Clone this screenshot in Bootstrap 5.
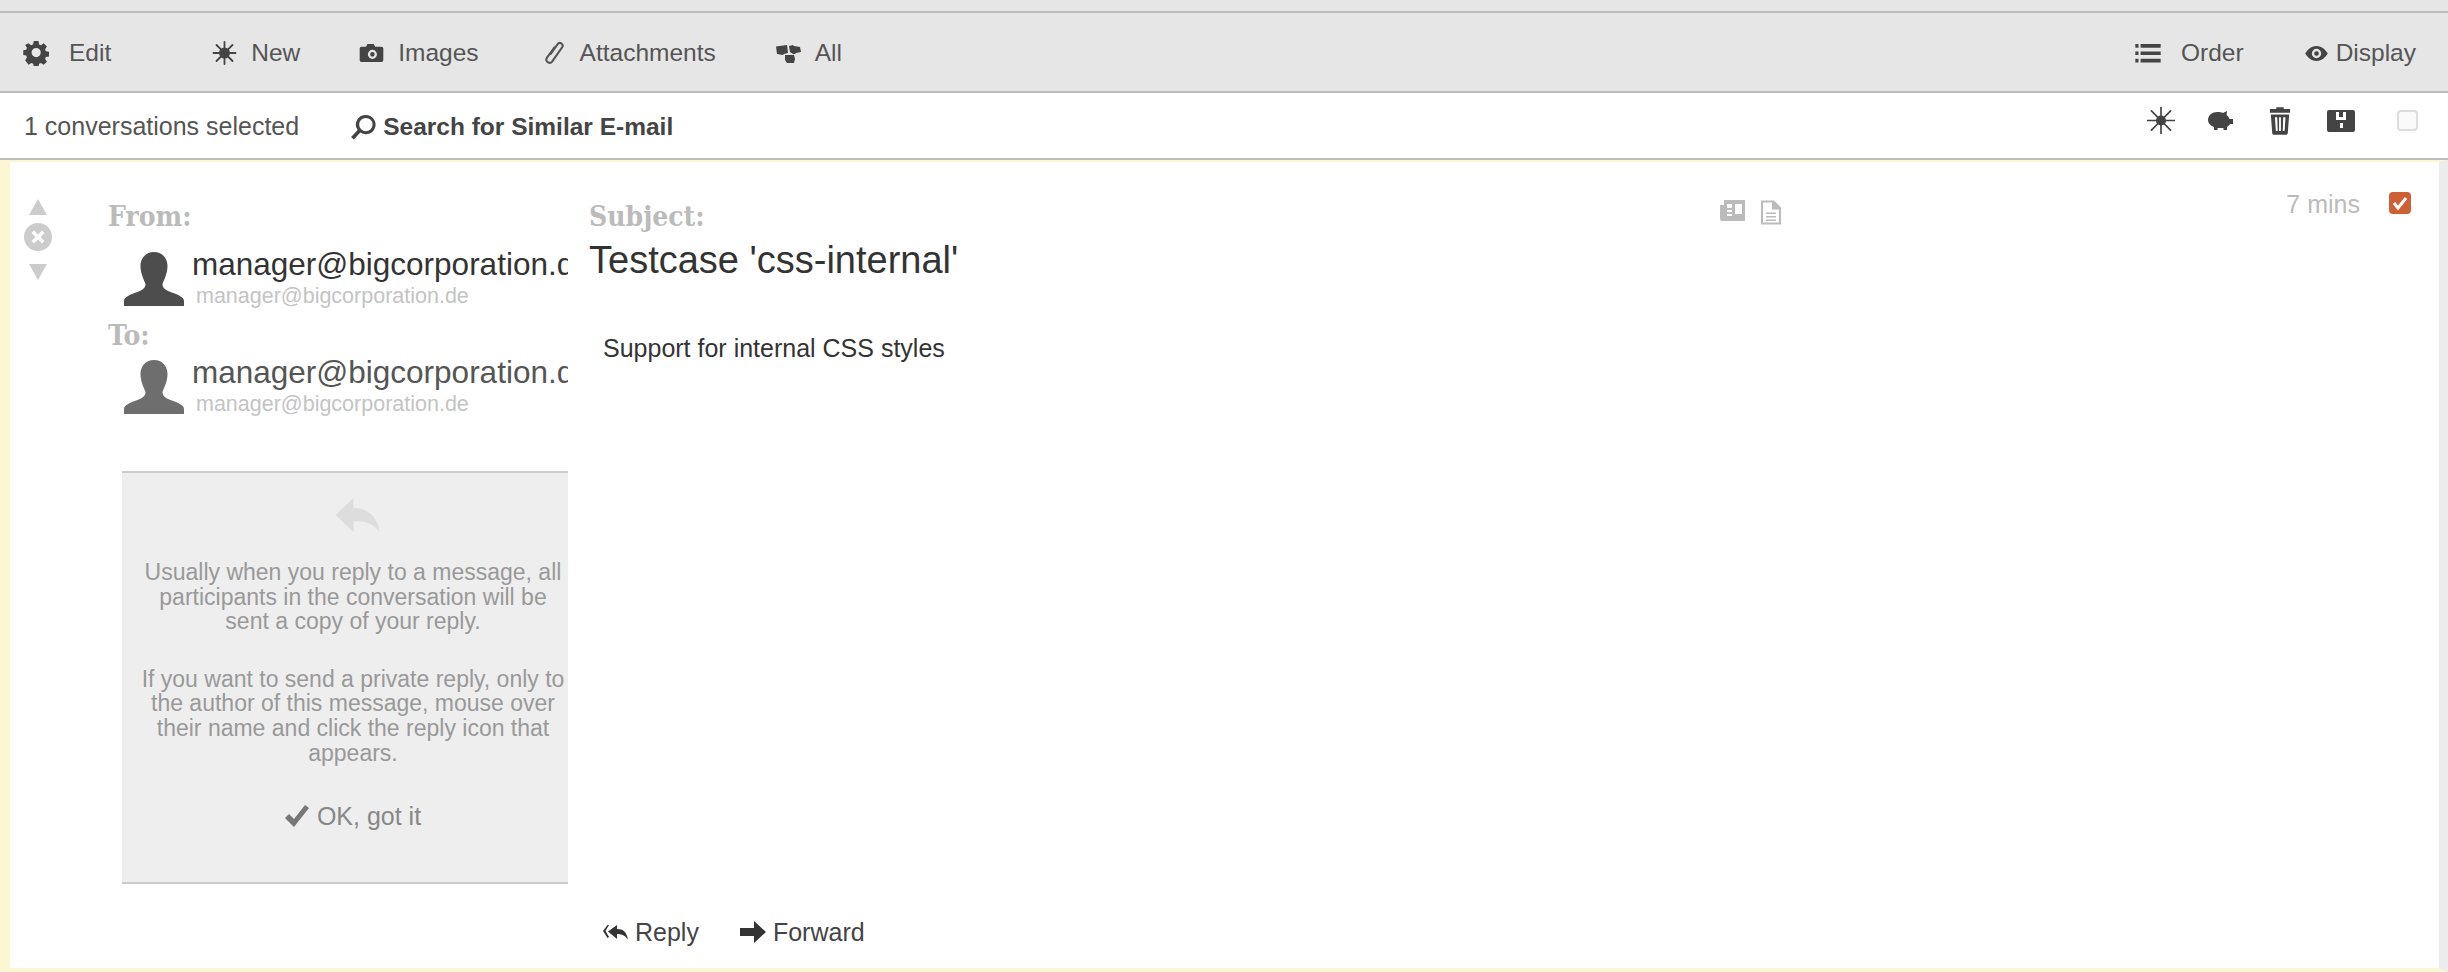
<!DOCTYPE html>
<html lang="en">
<head>
  <meta charset="UTF-8" />
  <title>Conversation</title>
  <link rel="stylesheet" href="https://cdn.jsdelivr.net/npm/bootstrap@5.3.2/dist/css/bootstrap.min.css" />
  <script src="https://cdn.jsdelivr.net/npm/bootstrap@5.3.2/dist/js/bootstrap.bundle.min.js"></script>
  <style>
    html, body { height: 100%; }
    body {
      font-family: "Liberation Sans", Arial, sans-serif;
      font-size: 25px;
      color: #555;
      background: #fff;
      overflow: hidden;
    }
    .app-shell { height: 972px; }
    .top-strip { height: 11px; background: #e6e6e6; border-bottom: 2px solid #bdbdbd; box-sizing: content-box; }
    .tool-bar {
      height: 78px;
      background: #e6e6e6;
      border-bottom: 2px solid #bdbdbd;
      box-sizing: content-box;
      padding: 0 32px 0 23px;
      font-size: 24.5px;
      flex: none;
    }
    .tool-bar > a { padding-top: 2px; }
    .tool-item { color: #555; text-decoration: none; line-height: 1; }
    .tool-item svg { display: block; fill: #444; flex: none; }
    .ico-gap-l { margin-right: 20px; }
    .ico-gap-m { margin-right: 14px; }
    .ico-gap-s { margin-right: 7px; }
    .tb-new { margin-left: 101px; }
    .tb-img { margin-left: 59px; }
    .tb-att { margin-left: 64px; }
    .tb-all { margin-left: 60px; }
    .tb-disp { margin-left: 60px; }
    .sel-bar {
      height: 63px;
      border-bottom: 2px solid #bdbdbd;
      box-sizing: content-box;
      padding: 2px 30px 0 24px;
      flex: none;
    }
    .sel-find { margin-left: 51px; padding-top: 2px; }
    .sel-find b { color: #444; font-size: 24.5px; }
    .sel-icons { padding-bottom: 12px; }
    .sel-icons svg { display: block; fill: #444; }
    .si-pig { margin-left: 33px; }
    .si-trash { margin-left: 36px; }
    .si-save { margin-left: 36px; }
    .blank-check { width: 21px; height: 21px; margin-left: 42px; border: 2px solid #ddd; border-radius: 4px; background: #fafafa; }
    .msg-frame {
      background: #fff;
      border-left: 10px solid #fbf7d2;
      border-top: 2px solid #fbf7d2;
      border-bottom: 4px solid #fbf7d2;
      border-right: 9px solid #ececec;
      min-height: 0;
    }
    .vote-col { width: 98px; padding: 36px 0 0 14px; flex: none; }
    .vote-col svg { display: block; fill: #ccc; }
    .vote-arrow { margin-left: 5px; }
    .vote-x { margin: 7px 0 12px; }
    .people-col { width: 460px; flex: none; overflow: hidden; padding-top: 41px; }
    .slab-label { font-family: "DejaVu Serif Condensed", "DejaVu Serif", serif; font-weight: 700; color: #bbb; font-size: 28px; line-height: 28px; }
    .person-row { padding-left: 16px; white-space: nowrap; }
    .person-row svg { flex: none; display: block; margin: 5px 8px 0 0; }
    .row-from { margin-top: 16px; }
    .row-to { margin-top: 5px; }
    .to-label { margin-top: 14px; }
    .person-name { font-size: 31.5px; line-height: 34px; color: #333; }
    .row-to .person-name { color: #555; }
    .person-mail { font-size: 21.5px; line-height: 24px; color: #c4c4c4; padding-left: 4px; margin-top: 3px; }
    .tip-box {
      width: 446px;
      height: 413px;
      margin: 55px 0 0 14px;
      background: #eee;
      border-top: 2px solid #ccc;
      border-bottom: 2px solid #ccc;
      color: #999;
      font-size: 23px;
      line-height: 24.6px;
      text-align: center;
      padding: 25px 0 0 16px;
    }
    .tip-reply { display: block; margin: 0 auto; position: relative; left: 4px; }
    .tip-box p { margin: 0; }
    .tip-first { margin-top: 28px !important; }
    .tip-second { margin-top: 33px !important; }
    .got-it { font-size: 25px; line-height: 28px; color: #888; margin-top: 37px; }
    .main-col { min-width: 0; padding-left: 21px; padding-top: 41px; }
    .subject-line { font-size: 38px; line-height: 44px; color: #333; margin-top: 7px; }
    .body-text { font-size: 25px; line-height: 28px; color: #333; padding-left: 14px; margin-top: 52px; }
    .msg-links { padding-left: 14px; color: #444; margin-top: auto; padding-bottom: 22px; line-height: 28px; }
    .msg-links svg { fill: #333; display: block; flex: none; }
    .fwd-ico { margin-left: 41px; }
    .side-col { width: 719px; flex: none; padding-right: 28px; }
    .doc-icons { margin-top: 38px; gap: 16px; }
    .doc-icons svg { display: block; fill: #bbb; }
    .age-text { color: #bbb; margin-top: 28px; line-height: 28px; }
    .tick-box { width: 22px; height: 22px; border-radius: 4px; background: #cf5f34; margin: 30px 0 0 29px; flex: none; }
    .tick-box svg { display: block; }
  </style>
</head>
<body>
  <div class="app-shell d-flex flex-column">
    <div class="top-strip"></div>

    <div class="tool-bar d-flex align-items-center">
      <a class="tool-item d-flex align-items-center" href="#">
        <svg class="ico-gap-l" width="26" height="26" viewBox="0 0 26 26"><path fill-rule="evenodd" d="M10.500 1h5l.7 3.600 2 .8 3-2 3.500 3.500-2 3 .8 2 3.500.7v5l-3.500.7-.8 2 2 3-3.500 3.500-3-2-2 .8-.7 3.100h-5l-.7-3.100-2-.8-3 2L1 21.700l2-3-.8-2L-1 16v-5l3.200-.7.800-2-2-3L4.500 3.400l3 2 2-.8zM13 8.500a5 5 0 1 0 0 10 5 5 0 0 0 0-10z" transform="translate(1.200 .2) scale(.92)"/></svg>
        <span>Edit</span>
      </a>
      <a class="tool-item d-flex align-items-center tb-new" href="#">
        <svg class="ico-gap-m" width="25" height="24" viewBox="0 0 24 24"><g stroke="#444" stroke-width="1.800" stroke-linecap="round" stroke-dasharray="7 1.500 15"><path d="M12 1v22M1 12h22M4 4l16 16M20 4 4 20"/></g><circle cx="12" cy="12" r="5.500"/></svg>
        <span>New</span>
      </a>
      <a class="tool-item d-flex align-items-center tb-img" href="#">
        <svg class="ico-gap-m" width="25" height="20" viewBox="0 0 26 22"><path fill-rule="evenodd" d="M2 4h5l1.500-3h7L17 4h7a2 2 0 0 1 2 2v13a2 2 0 0 1-2 2H2a2 2 0 0 1-2-2V6a2 2 0 0 1 2-2zm12 3.500a5 5 0 1 0 0 10 5 5 0 0 0 0-10zm0 2.500a2.500 2.500 0 1 1 0 5 2.500 2.500 0 0 1 0-5z"/></svg>
        <span>Images</span>
      </a>
      <a class="tool-item d-flex align-items-center tb-att" href="#">
        <svg class="ico-gap-m" width="23" height="26" viewBox="0 0 24 26"><path fill="none" stroke="#555" stroke-width="2.200" stroke-linecap="round" d="M8 14 15.500 3.500c2-2.800 6.500.5 4.500 3.500L9.500 22c-2.500 3.200-8-.5-5.500-4L12 7"/></svg>
        <span>Attachments</span>
      </a>
      <a class="tool-item d-flex align-items-center tb-all" href="#">
        <svg class="ico-gap-m" width="25" height="19" viewBox="0 0 25 19"><path d="M0 2.500 11 1l1 8-4 1-1 1-6-1zM13 2l4-1 1 1 6 1 1 5-5 1-1 1h-2l-3-2zM9 11h9l1 4-1 4h-7l-2-3z"/></svg>
        <span>All</span>
      </a>
      <a class="tool-item d-flex align-items-center ms-auto" href="#">
        <svg class="ico-gap-l" width="26" height="19" viewBox="0 0 24 18"><path d="M0 0h3v3.500H0zM5 0h19v3.500H5zM0 7h3v3.500H0zM5 7h19v3.500H5zM0 14h3v3.500H0zM5 14h19v3.500H5z"/></svg>
        <span>Order</span>
      </a>
      <a class="tool-item d-flex align-items-center tb-disp" href="#">
        <svg class="ico-gap-s" width="25" height="15" viewBox="0 0 24 16"><path fill-rule="evenodd" d="M12 0c6 0 10 4.500 12 8-2 3.500-6 8-12 8S2 11.500 0 8c2-3.500 6-8 12-8zm0 3a5 5 0 1 0 0 10 5 5 0 0 0 0-10zm0 2.500a2.500 2.500 0 1 1 0 5 2.500 2.500 0 0 1 0-5z"/></svg>
        <span>Display</span>
      </a>
    </div>

    <div class="sel-bar d-flex align-items-center">
      <span>1 conversations selected</span>
      <a class="tool-item d-flex align-items-center sel-find" href="#">
        <svg class="ico-gap-s" width="26" height="25" viewBox="0 0 26 26"><path fill-rule="evenodd" d="M16 0a10 10 0 1 1-5.800 18.100L3.500 25.500.6 23l6.800-7.300A10 10 0 0 1 16 0zm0 3a7 7 0 1 0 0 14 7 7 0 0 0 0-14z"/></svg>
        <b>Search for Similar E-mail</b>
      </a>
      <div class="sel-icons d-flex align-items-center ms-auto">
        <svg width="28" height="27" viewBox="0 0 24 24"><g stroke="#444" stroke-width="1.500" stroke-linecap="round" stroke-dasharray="8 1.500 15"><path d="M12 0v24M0 12h24M3.500 3.500l17 17M20.500 3.500l-17 17"/></g><circle cx="12" cy="12" r="4.500"/></svg>
        <svg class="si-pig" width="25" height="19" viewBox="0 0 25 19"><path d="M9 1c3 0 4.500.3 6 1l4-2-.5 4c1.500 1 2.500 2.500 3 4H25v5h-3c-.7 1-1.500 2-3 3v3h-3.500v-2h-6v2H6v-3C2 14.500 0 12 0 9c0-5 4.500-8 9-8z"/></svg>
        <svg class="si-trash" width="22" height="28" viewBox="0 0 24 30"><path fill-rule="evenodd" d="M8 0h8v2h7v4H1V2h7zM2 8h20l-1.500 20a2 2 0 0 1-2 2h-13a2 2 0 0 1-2-2zm4.500 3 1 15h2l-.5-15zm4.500 0v15h2V11zm4.500 0-.5 15h2l1-15z"/></svg>
        <svg class="si-save" width="28" height="22" viewBox="0 0 28 22"><path fill-rule="evenodd" d="M2 0h24a2 2 0 0 1 2 2v18a2 2 0 0 1-2 2H2a2 2 0 0 1-2-2V2a2 2 0 0 1 2-2zm7 2v8h10V2h-3v5h-4V2zm4 11v5h3v-5z"/></svg>
        <div class="blank-check"></div>
      </div>
    </div>

    <div class="msg-frame d-flex flex-grow-1">
      <div class="vote-col">
        <svg class="vote-arrow" width="18" height="18" viewBox="0 0 20 18"><path d="M10 0l10 18H0z"/></svg>
        <svg class="vote-x" width="28" height="28" viewBox="0 0 28 28"><path fill-rule="evenodd" d="M14 0a14 14 0 1 1 0 28 14 14 0 0 1 0-28zM10 7.500 7.500 10l4 4-4 4 2.500 2.500 4-4 4 4 2.500-2.500-4-4 4-4L18 7.500l-4 4z"/></svg>
        <svg class="vote-arrow" width="18" height="18" viewBox="0 0 20 18"><path d="M0 0h20L10 18z"/></svg>
      </div>

      <div class="people-col">
        <div class="slab-label">From:</div>
        <div class="person-row d-flex row-from">
          <svg width="60" height="54" viewBox="0 0 60 54" fill="#4d4d4d"><path d="M30 0c8 0 13.500 6 13.500 14 0 7-3 13-5 18 0 3 1 5 8 8 8 3 13.500 5 13.500 9v5H0v-5c0-4 5.500-6 13.500-9 7-3 8-5 8-8-2-5-5-11-5-18C16.500 6 22 0 30 0z"/></svg>
          <div>
            <div class="person-name">manager@bigcorporation.de</div>
            <div class="person-mail">manager@bigcorporation.de</div>
          </div>
        </div>
        <div class="slab-label to-label">To:</div>
        <div class="person-row d-flex row-to">
          <svg width="60" height="54" viewBox="0 0 60 54" fill="#6e6e6e"><path d="M30 0c8 0 13.500 6 13.500 14 0 7-3 13-5 18 0 3 1 5 8 8 8 3 13.500 5 13.500 9v5H0v-5c0-4 5.500-6 13.500-9 7-3 8-5 8-8-2-5-5-11-5-18C16.500 6 22 0 30 0z"/></svg>
          <div>
            <div class="person-name">manager@bigcorporation.de</div>
            <div class="person-mail">manager@bigcorporation.de</div>
          </div>
        </div>
        <div class="tip-box">
          <svg class="tip-reply" width="45" height="34" viewBox="0 0 44 34" fill="#ddd"><path d="M18 0v10c14 0 24 8 26 24-5-8-14-11-26-11v11L0 17z"/></svg>
          <p class="tip-first">Usually when you reply to a message, all participants in the conversation will be sent a copy of your reply.</p>
          <p class="tip-second">If you want to send a private reply, only to the author of this message, mouse over their name and click the reply icon that appears.</p>
          <div class="got-it d-flex justify-content-center align-items-center gap-2">
            <svg width="24" height="22" viewBox="0 0 24 22" fill="#777"><path d="M0 13l4-4 5 5L20 0l4 3L9 22z"/></svg>
            <span>OK, got it</span>
          </div>
        </div>
      </div>

      <div class="main-col flex-grow-1 d-flex flex-column">
        <div class="slab-label">Subject:</div>
        <div class="subject-line">Testcase 'css-internal'</div>
        <div class="body-text">Support for internal CSS styles</div>
        <div class="msg-links d-flex align-items-center">
          <svg class="ico-gap-s" width="25" height="15" viewBox="0 0 25 15"><path d="M6 0 2.500 6 6 12 4.500 13 0 6 4.500 0zM14 0v4c6 0 10 3 11 11-2-4-6-6-11-6v5L5 6.500z"/></svg>
          <span>Reply</span>
          <svg class="fwd-ico ico-gap-s" width="26" height="22" viewBox="0 0 26 22"><path d="M0 7h14V0l12 11-12 11v-7H0z"/></svg>
          <span>Forward</span>
        </div>
      </div>

      <div class="side-col d-flex">
        <div class="doc-icons d-flex align-items-start">
          <svg width="25" height="21" viewBox="0 0 25 21"><path fill-rule="evenodd" d="M4 0h21v21H2a2 2 0 0 1-2-2V5h4zm3 4v4h5V4zm8 0v10h7V4zM7 10v2h5v-2zm0 4v2h5v-2z"/></svg>
          <svg width="20" height="25" viewBox="0 0 20 24"><path fill-rule="evenodd" d="M0 0h13l7 7v17H0zm2 2v20h16V9h-7V2zM5 12h10v1.500H5zm0 3.500h10V17H5zm0 3.500h10v1.500H5z"/></svg>
        </div>
        <div class="age-text ms-auto">7 mins</div>
        <div class="tick-box">
          <svg width="22" height="22" viewBox="0 0 22 22"><path fill="none" stroke="#fff" stroke-width="3" d="M5 11l4 5 8-10"/></svg>
        </div>
      </div>
    </div>
  </div>
</body>
</html>
